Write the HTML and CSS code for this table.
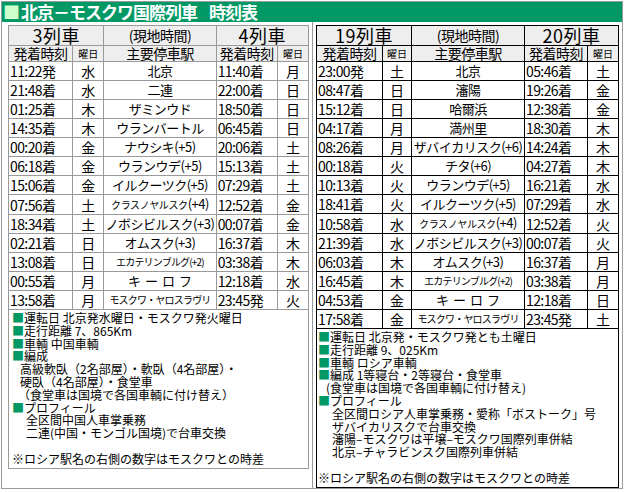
FILE: index.html
```html
<!DOCTYPE html>
<html lang="ja">
<head>
<meta charset="utf-8">
<title>北京－モスクワ国際列車 時刻表</title>
<link rel="stylesheet" href="styles.css">
</head>
<body>
<div class="page">
  <div class="title"><span class="tmark">■</span>北京－モスクワ国際列車<span class="tgap"></span>時刻表</div>
  <div class="cols">
    <div class="left">
      <table class="tt gray">
        <colgroup><col class="c1"><col class="c2"><col class="c3"><col class="c4"><col class="c5"></colgroup>
        <tr class="h1"><td colspan="2" class="big">3列車</td><td class="mid">(現地時間)</td><td colspan="2" class="big">4列車</td></tr>
        <tr class="h2"><td>発着時刻</td><td class="tiny">曜日</td><td>主要停車駅</td><td>発着時刻</td><td class="tiny">曜日</td></tr>
        <tr><td class="t">11:22発</td><td class="d">水</td><td class="s">北京</td><td class="t">11:40着</td><td class="d">月</td></tr>
        <tr><td class="t">21:48着</td><td class="d">水</td><td class="s">二連</td><td class="t">22:00着</td><td class="d">日</td></tr>
        <tr><td class="t">01:25着</td><td class="d">木</td><td class="s">ザミンウド</td><td class="t">18:50着</td><td class="d">日</td></tr>
        <tr><td class="t">14:35着</td><td class="d">木</td><td class="s">ウランバートル</td><td class="t">06:45着</td><td class="d">日</td></tr>
        <tr><td class="t">00:20着</td><td class="d">金</td><td class="s">ナウシキ(+5)</td><td class="t">20:06着</td><td class="d">土</td></tr>
        <tr><td class="t">06:18着</td><td class="d">金</td><td class="s">ウランウデ(+5)</td><td class="t">15:13着</td><td class="d">土</td></tr>
        <tr><td class="t">15:06着</td><td class="d">金</td><td class="s">イルクーツク(+5)</td><td class="t">07:29着</td><td class="d">土</td></tr>
        <tr><td class="t">07:56着</td><td class="d">土</td><td class="s"><span class="sm">クラスノヤルスク</span>(+4)</td><td class="t">12:52着</td><td class="d">金</td></tr>
        <tr><td class="t">18:34着</td><td class="d">土</td><td class="s">ノボシビルスク(+3)</td><td class="t">00:07着</td><td class="d">金</td></tr>
        <tr><td class="t">02:21着</td><td class="d">日</td><td class="s">オムスク(+3)</td><td class="t">16:37着</td><td class="d">木</td></tr>
        <tr><td class="t">13:08着</td><td class="d">日</td><td class="s xs">エカテリンブルグ(+2)</td><td class="t">03:38着</td><td class="d">木</td></tr>
        <tr><td class="t">00:55着</td><td class="d">月</td><td class="s wide">キーロフ</td><td class="t">12:18着</td><td class="d">水</td></tr>
        <tr><td class="t">13:58着</td><td class="d">月</td><td class="s xs">モスクワ・ヤロスラヴリ</td><td class="t">23:45発</td><td class="d">火</td></tr>
        <tr><td colspan="5" class="notes nl">
          <div><span class="sq">■</span>運転日 北京発水曜日・モスクワ発火曜日</div>
          <div><span class="sq">■</span>走行距離 7、865Km</div>
          <div><span class="sq">■</span>車輌 中国車輌</div>
          <div><span class="sq">■</span>編成</div>
          <div class="in1">高級軟臥（2名部屋）・軟臥（4名部屋）・</div>
          <div class="in1">硬臥（4名部屋）・食堂車</div>
          <div class="in0">（食堂車は国境で各国車輌に付け替え）</div>
          <div><span class="sq">■</span>プロフィール</div>
          <div class="in2">全区間中国人車掌乗務</div>
          <div class="in2">二連(中国・モンゴル国境)で台車交換</div>
          <div class="blank"></div>
          <div>※ロシア駅名の右側の数字はモスクワとの時差</div>
        </td></tr>
      </table>
    </div>
    <div class="right">
      <table class="tt black">
        <colgroup><col class="r1"><col class="r2"><col class="r3"><col class="r4"><col class="r5"></colgroup>
        <tr class="h1"><td colspan="2" class="big">19列車</td><td class="mid">(現地時間)</td><td colspan="2" class="big">20列車</td></tr>
        <tr class="h2"><td>発着時刻</td><td class="tiny">曜日</td><td>主要停車駅</td><td>発着時刻</td><td class="tiny">曜日</td></tr>
        <tr><td class="t">23:00発</td><td class="d">土</td><td class="s">北京</td><td class="t">05:46着</td><td class="d">土</td></tr>
        <tr><td class="t">08:47着</td><td class="d">日</td><td class="s">瀋陽</td><td class="t">19:26着</td><td class="d">金</td></tr>
        <tr><td class="t">15:12着</td><td class="d">日</td><td class="s">哈爾浜</td><td class="t">12:38着</td><td class="d">金</td></tr>
        <tr><td class="t">04:17着</td><td class="d">月</td><td class="s">満州里</td><td class="t">18:30着</td><td class="d">木</td></tr>
        <tr><td class="t">08:26着</td><td class="d">月</td><td class="s">ザバイカリスク(+6)</td><td class="t">14:24着</td><td class="d">木</td></tr>
        <tr><td class="t">00:18着</td><td class="d">火</td><td class="s">チタ(+6)</td><td class="t">04:27着</td><td class="d">木</td></tr>
        <tr><td class="t">10:13着</td><td class="d">火</td><td class="s">ウランウデ(+5)</td><td class="t">16:21着</td><td class="d">水</td></tr>
        <tr><td class="t">18:41着</td><td class="d">火</td><td class="s">イルクーツク(+5)</td><td class="t">07:29着</td><td class="d">水</td></tr>
        <tr><td class="t">10:58着</td><td class="d">水</td><td class="s"><span class="sm">クラスノヤルスク</span>(+4)</td><td class="t">12:52着</td><td class="d">火</td></tr>
        <tr><td class="t">21:39着</td><td class="d">水</td><td class="s">ノボシビルスク(+3)</td><td class="t">00:07着</td><td class="d">火</td></tr>
        <tr><td class="t">06:03着</td><td class="d">木</td><td class="s">オムスク(+3)</td><td class="t">16:37着</td><td class="d">月</td></tr>
        <tr><td class="t">16:45着</td><td class="d">木</td><td class="s xs">エカテリンブルグ(+2)</td><td class="t">03:38着</td><td class="d">月</td></tr>
        <tr><td class="t">04:53着</td><td class="d">金</td><td class="s wide">キーロフ</td><td class="t">12:18着</td><td class="d">日</td></tr>
        <tr><td class="t">17:58着</td><td class="d">金</td><td class="s xs">モスクワ・ヤロスラヴリ</td><td class="t">23:45発</td><td class="d">土</td></tr>
        <tr><td colspan="5" class="notes nr">
          <div><span class="sq">■</span>運転日 北京発・モスクワ発とも土曜日</div>
          <div><span class="sq">■</span>走行距離 9、025Km</div>
          <div><span class="sq">■</span>車輌 ロシア車輌</div>
          <div><span class="sq">■</span>編成 1等寝台・2等寝台・食堂車</div>
          <div class="in1">(食堂車は国境で各国車輌に付け替え)</div>
          <div><span class="sq">■</span>プロフィール</div>
          <div class="in2">全区間ロシア人車掌乗務・愛称「ボストーク」号</div>
          <div class="in2">ザバイカリスクで台車交換</div>
          <div class="in2">瀋陽–モスクワは平壌–モスクワ国際列車併結</div>
          <div class="in2">北京–チャラビンスク国際列車併結</div>
          <div class="blank"></div>
          <div>※ロシア駅名の右側の数字はモスクワとの時差</div>
        </td></tr>
      </table>
    </div>
  </div>
</div>
</body>
</html>
```
FILE: styles.css
```css
html, body {
  margin: 0;
  padding: 0;
  background: #fff;
}
body {
  font-family: "Noto Sans CJK JP", "Noto Sans", sans-serif;
  color: #000;
}
.page {
  margin: 1px 0 0 1px;
  width: 620px;
  height: 486px;
  border: 1px solid #999;
}
.title {
  height: 20px;
  background: #009966;
  color: #fff;
  font-size: 17px;
  font-weight: 700;
  line-height: 20px;
  padding-left: 1px;
  white-space: nowrap;
  letter-spacing: -1px;
}
.tmark {
  color: #ccffcc;
  font-weight: 400;
  margin-right: 2px;
}
.tgap {
  display: inline-block;
  width: 12px;
}
.cols {
  display: flex;
  height: 466px;
}
.left {
  width: 311px;
  box-sizing: border-box;
  border-right: 1px solid #999;
  padding: 3px 0 0 6px;
}
.right {
  flex: 1;
  padding: 3px 0 0 3px;
}
.tt {
  border-collapse: collapse;
  table-layout: fixed;
}
.gray { width: 301px; }
.black { width: 303px; }
.gray td { border: 1px solid #999; }
.black td { border: 1px solid #000; }
.c1 { width: 64px; }
.c2 { width: 31px; }
.c3 { width: 112px; }
.c4 { width: 61px; }
.c5 { width: 31px; }
.r1 { width: 66px; }
.r2 { width: 29px; }
.r3 { width: 113px; }
.r4 { width: 63px; }
.r5 { width: 31px; }
.tt td {
  padding: 0;
  height: 18px;
  font-size: 14px;
  line-height: 18px;
  white-space: nowrap;
  overflow: hidden;
}
.tt .h1 td {
  height: 19px;
  line-height: 19px;
  background: #eee;
  text-align: center;
  overflow: visible;
}
.tt .h2 td {
  height: 15px;
  line-height: 15px;
  background: #eee;
  text-align: center;
  font-size: 14px;
  letter-spacing: -0.5px;
  overflow: visible;
}
.tt td.big { font-size: 18px; letter-spacing: 0.5px; }
.tt td.mid { font-size: 14px; letter-spacing: -0.5px; }
.tt .h2 td.tiny { font-size: 10px; letter-spacing: 0; }
.tt td.t {
  padding-left: 1px;
  letter-spacing: -0.6px;
}
.tt td.d { text-align: center; }
.tt td.s {
  text-align: center;
  font-size: 13px;
  letter-spacing: -0.5px;
}
.sm { font-size: 10px; letter-spacing: -0.4px; }
.tt td.xs { font-size: 10px; letter-spacing: -0.8px; }
.tt td.wide { letter-spacing: 4px; text-indent: 4px; }
.tt td.notes {
  height: 156px;
  vertical-align: top;
  font-size: 12px;
  line-height: 12.8px;
  padding-top: 2px;
  letter-spacing: 0;
}
.nl { padding-left: 3px !important; }
.nr { padding-left: 1px !important; }
.notes div { height: 12.8px; white-space: nowrap; }
.sq { color: #009966; }
.in0 { padding-left: 6px; }
.in1 { padding-left: 8px; }
.in2 { padding-left: 14px; }
```
